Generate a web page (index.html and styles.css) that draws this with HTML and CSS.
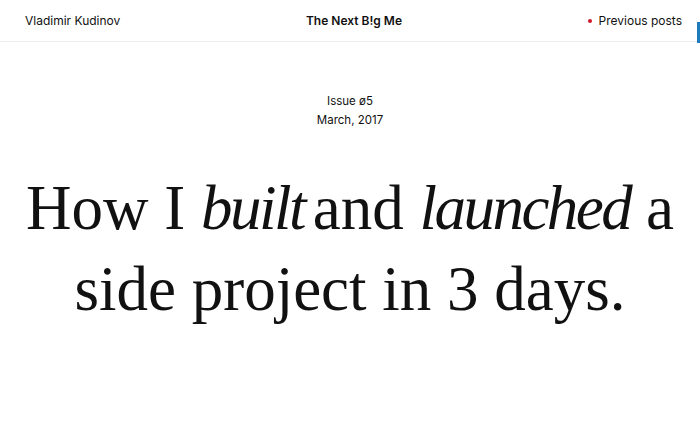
FILE: index.html
```html
<!DOCTYPE html>
<html lang="en">
<head>
    <meta charset="UTF-8">
    <meta name="viewport" content="width=device-width, initial-scale=1.0">
    <title>How I built and launched a side project in 3 days</title>
    <link rel="stylesheet" href="styles.css">
</head>
<body>
    <header class="top-bar">
        <a class="author" href="#">Vladimir Kudinov</a>
        <a class="blog-name" href="#">The Next B!g Me</a>
        <a class="prev-link" href="#"><span class="dot"></span>Previous posts</a>
    </header>
    <span class="side-tab"></span>

    <main class="post">
        <div class="meta">
            <p>Issue ø5</p>
            <p>March, 2017</p>
        </div>
        <h1 class="title">How I <em class="tight">built</em> and <em>launched</em> a side project in 3 days.</h1>
    </main>
</body>
</html>
```

FILE: styles.css
```css
body {
    margin: 0;
    font-family: Inter, "Open Sans", sans-serif;
    color: #111;
    background: #fff;
}
a {
    color: inherit;
    text-decoration: none;
}
.top-bar {
    display: flex;
    justify-content: space-between;
    align-items: center;
    height: 42px;
    padding: 0 18px 0 25px;
    border-bottom: 1px solid #eeeeee;
    font-size: 12px;
    box-sizing: border-box;
}
.blog-name {
    font-weight: 600;
}
.prev-link {
    display: flex;
    align-items: center;
    gap: 7px;
}
.dot {
    width: 4px;
    height: 4px;
    border-radius: 50%;
    background: #d0182b;
}
.side-tab {
    position: absolute;
    top: 22px;
    right: 0;
    width: 3px;
    height: 21px;
    background: #1f7bc0;
}
.post {
    text-align: center;
}
.meta {
    padding-top: 50px;
    font-size: 11.5px;
    line-height: 19px;
}
.meta p {
    margin: 0;
}
.title {
    margin: 38px 0 0;
    font-family: "Liberation Serif", serif;
    font-weight: 400;
    font-size: 63px;
    line-height: 81px;
}
.title em {
    font-style: italic;
    letter-spacing: -2.5px;
}
.title .tight {
    margin-right: -7px;
}
```
